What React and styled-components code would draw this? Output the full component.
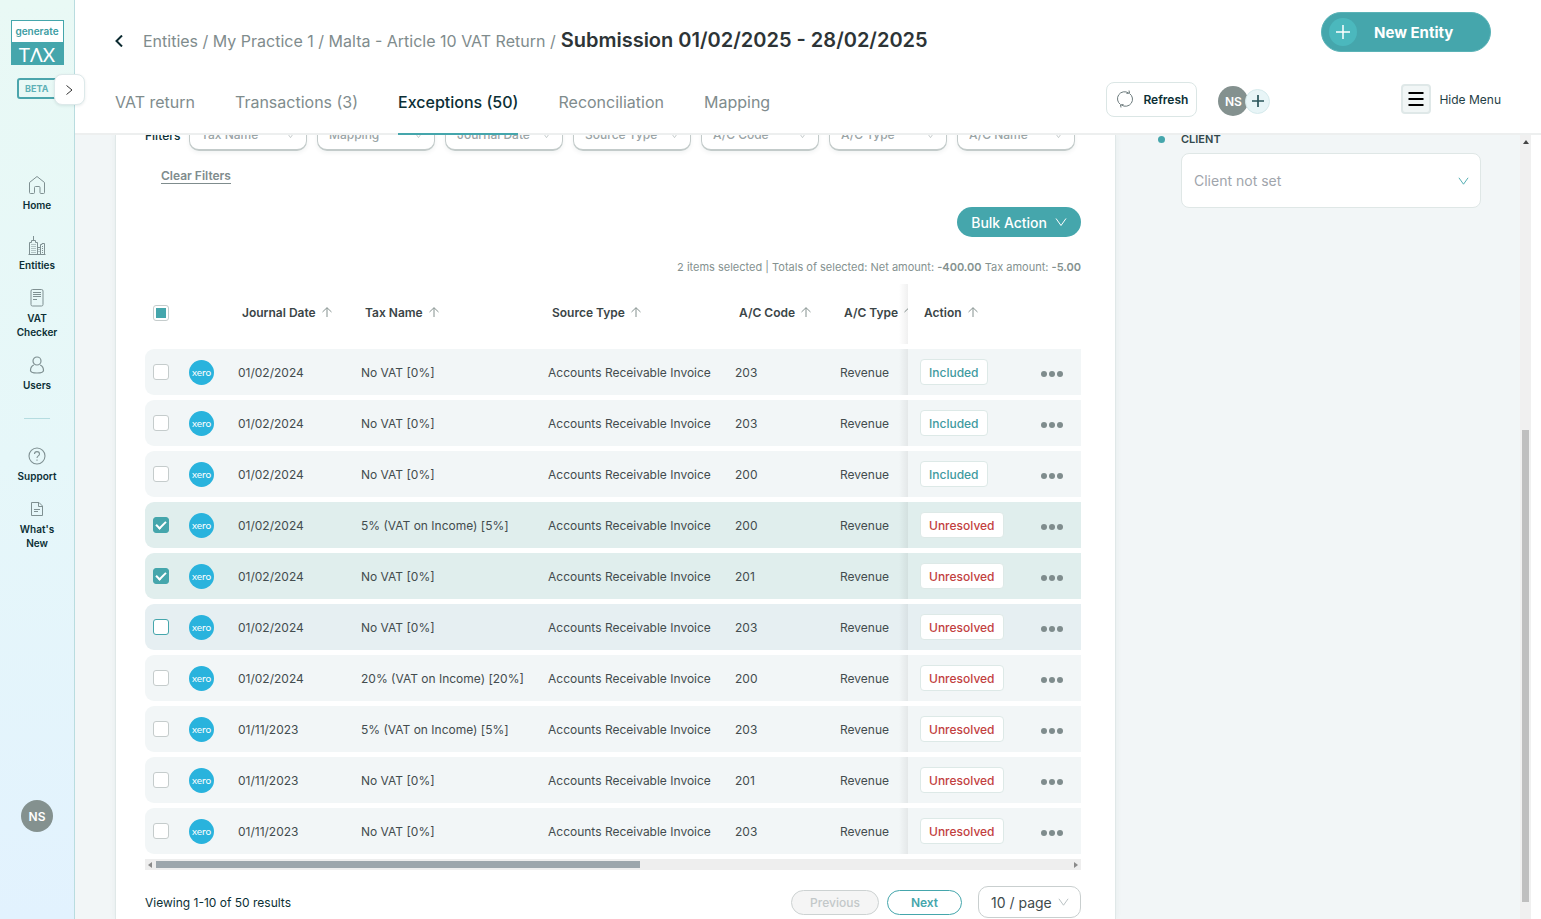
import { useState } from "react";
import styled, { createGlobalStyle } from "styled-components";

const GlobalStyle = createGlobalStyle`
  *, *::before, *::after {
    box-sizing: border-box;
  }
  body {
    margin: 0;
    background: #fff;
    color: #0b2f35;
    font-family: Inter, "Liberation Sans", sans-serif;
    font-size: 12px;
  }
  button, select, input {
    font-family: inherit;
    margin: 0;
  }
  button {
    cursor: pointer;
  }
  a {
    color: inherit;
    text-decoration: none;
  }
`;

const Page = styled.div`
  display: flex;
  height: 100vh;
  overflow: hidden;
`;

/* sidebar */

const Sidebar = styled.aside`
  position: relative;
  z-index: 3;
  flex: none;
  display: flex;
  flex-direction: column;
  align-items: center;
  width: 75px;
  padding: 20px 0 87px;
  border-right: 1px solid #b9dcdf;
  background: linear-gradient(180deg, #e9f9f5 0%, #e6f7f9 50%, #e2f2fe 100%);
`;

const Logo = styled.a`
  width: 53px;
  border: 1px solid #45a6ac;
  background: #fff;
  text-align: center;
`;

const LogoTop = styled.div`
  height: 21px;
  color: #3d9da3;
  font-size: 10px;
  font-weight: 600;
  line-height: 20px;
`;

const LogoBottom = styled.div`
  height: 22px;
  background: #45a6ac;
  color: #fff;
  font-family: Lato, Inter, sans-serif;
  font-size: 19px;
  line-height: 25px;
`;

const Beta = styled.div`
  align-self: flex-start;
  width: 42px;
  height: 21px;
  margin: 13px 0 0 17px;
  padding-left: 6px;
  border: 2px solid #4ba5ac;
  border-radius: 3px;
  color: #5fb1b7;
  font-size: 9px;
  font-weight: 700;
  line-height: 17px;
`;

const Expand = styled.button`
  position: absolute;
  top: 74px;
  right: -11px;
  display: flex;
  align-items: center;
  justify-content: center;
  width: 31px;
  height: 31px;
  padding: 0;
  border: 1px solid #dde9ea;
  border-radius: 8px;
  background: #fff;
  color: #333;
  box-shadow: 0 1px 3px rgba(0, 60, 60, 0.1);
`;

const Nav = styled.nav`
  display: flex;
  flex-direction: column;
  align-items: center;
  gap: 23px;
  margin-top: 76px;
`;

const NavGroup = styled.div`
  display: flex;
  flex-direction: column;
  gap: 16px;
`;

const NavItem = styled.a`
  display: flex;
  flex-direction: column;
  align-items: center;
  gap: 3px;
  width: 50px;
  font-size: 10px;
  font-weight: 600;
  line-height: 14px;
  text-align: center;
`;

const NavLine = styled.div`
  width: 26px;
  height: 1px;
  margin: 3px 0 4px;
  background: #b5dce0;
`;

const Avatar = styled.div`
  flex: none;
  display: flex;
  align-items: center;
  justify-content: center;
  width: 30px;
  height: 30px;
  border-radius: 50%;
  background: #84918f;
  color: #fff;
  font-size: 12px;
  font-weight: 600;
`;

const SideAvatar = styled(Avatar)`
  width: 32px;
  height: 32px;
  margin-top: auto;
`;

/* header */

const Main = styled.main`
  flex: 1;
  min-width: 0;
  display: flex;
  flex-direction: column;
`;

const Header = styled.header`
  position: relative;
  z-index: 2;
  flex: none;
  padding: 12px 40px 0;
  border-bottom: 2px solid #edefef;
  background: #fff;
`;

const TitleRow = styled.div`
  display: flex;
  align-items: flex-end;
  justify-content: space-between;
  padding-right: 10px;
`;

const Crumbs = styled.div`
  display: flex;
  align-items: baseline;
  color: #7f8c8d;
  font-size: 16px;
  line-height: 22px;
`;

const Back = styled.button`
  align-self: center;
  display: flex;
  width: 28px;
  padding: 0;
  border: 0;
  background: none;
  color: #0b2a30;
`;

const Title = styled.h1`
  margin: 0 0 0 5px;
  color: #2d3436;
  font-size: 20px;
  font-weight: 600;
  line-height: 22px;
`;

const NewEntity = styled.button`
  display: flex;
  align-items: center;
  gap: 17px;
  width: 170px;
  height: 40px;
  padding: 0 7px;
  border: 1px solid #5bb3b7;
  border-radius: 20px;
  background: #45a6ac;
  color: #fff;
  font-size: 15px;
  font-weight: 700;
`;

const PlusDisc = styled.i`
  display: flex;
  align-items: center;
  justify-content: center;
  width: 28px;
  height: 28px;
  border-radius: 50%;
  background: #4bb8bd;
`;

const TabRow = styled.div`
  display: flex;
  height: 66px;
  margin: 17px 0 -2px;
`;

const Tabs = styled.nav`
  display: flex;
  gap: 40px;
`;

const Tab = styled.a`
  border-bottom: 2px solid ${(props) => (props.$active ? "#45a6ac" : "transparent")};
  color: ${(props) => (props.$active ? "#0b2f35" : "#7f8c8d")};
  font-size: 16px;
  font-weight: ${(props) => (props.$active ? 500 : 400)};
  line-height: 66px;
  white-space: nowrap;
`;

const Actions = styled.div`
  display: flex;
  align-items: center;
  margin-left: auto;
  padding-bottom: 6px;
`;

const Refresh = styled.button`
  display: flex;
  align-items: center;
  gap: 9px;
  height: 35px;
  padding: 0 8px 0 9px;
  border: 1px solid #dbe6e5;
  border-radius: 8px;
  background: #fff;
  color: #0b2f35;
  font-size: 12px;
  font-weight: 600;
`;

const People = styled.div`
  display: flex;
  align-items: center;
  margin: 4px 131px 0 21px;
`;

const AddPerson = styled.button`
  display: flex;
  align-items: center;
  justify-content: center;
  width: 25px;
  height: 25px;
  margin-left: -3px;
  padding: 0;
  border: 1px solid #d5eaec;
  border-radius: 50%;
  background: #e8f5f7;
  color: #2a555b;
`;

const MenuToggle = styled.button`
  display: flex;
  align-items: center;
  gap: 8px;
  padding: 0;
  border: 0;
  background: none;
  color: #1f4046;
  font-size: 12px;
`;

const MenuIcon = styled.i`
  display: flex;
  align-items: center;
  justify-content: center;
  width: 30px;
  height: 30px;
  border: 2px solid #dfe8e8;
  border-radius: 4px;
  background: #f1f6f6;
  color: #000;
`;

/* content */

const Content = styled.div`
  flex: 1;
  display: flex;
  min-height: 0;
  margin-right: 10px;
  overflow: hidden;
  background: #f2f6f7;
`;

const Card = styled.section`
  flex: 1;
  min-width: 0;
  margin-left: 40px;
  padding: 0 34px 0 29px;
  border: 1px solid #e0e8e8;
  border-width: 0 1px;
  background: #fff;
  box-shadow: 0 0 6px rgba(0, 60, 60, 0.06);
`;

const FilterRow = styled.div`
  display: flex;
  align-items: center;
  gap: 10px;
  margin: -16px 6px 0 0;
`;

const FilterTitle = styled.span`
  width: 34px;
  font-weight: 500;
`;

const SelectBox = styled.label`
  position: relative;
  display: flex;
  flex: ${(props) => (props.$grow ? "1 1 0" : "none")};
  min-width: 0;

  svg {
    position: absolute;
    top: 50%;
    right: 12px;
    transform: translateY(-50%);
    pointer-events: none;
  }
`;

const FilterSelect = styled.select`
  appearance: none;
  width: 100%;
  height: 32px;
  padding: 0 24px 0 11px;
  border: 1px solid #c3cbca;
  border-bottom-width: 2px;
  border-radius: 10px;
  background: #fff;
  color: #9aa4a6;
  font-size: 12px;
  font-weight: 500;
  box-shadow: 0 2px 4px rgba(0, 50, 50, 0.06);
`;

const ClearFilters = styled.button`
  display: block;
  margin: 17px 0 0 16px;
  padding: 0;
  border: 0;
  border-bottom: 1px solid #7f8c8d;
  background: none;
  color: #7f8c8d;
  font-size: 12px;
  font-weight: 600;
  line-height: 15px;
`;

const BulkAction = styled.button`
  display: flex;
  align-items: center;
  gap: 8px;
  height: 30px;
  margin: 23px 0 0 auto;
  padding: 0 14px;
  border: 0;
  border-radius: 15px;
  background: #45a6ac;
  color: #fff;
  font-size: 14px;
  font-weight: 500;
`;

const Summary = styled.p`
  margin: 22px 0 0;
  color: #84918f;
  font-size: 11px;
  line-height: 16px;
  text-align: right;

  b {
    font-weight: 600;
  }
`;

const Table = styled.table`
  width: 100%;
  margin-top: 4px;
  border-collapse: separate;
  border-spacing: 0 5px;
  table-layout: fixed;
`;

const Col = styled.col`
  width: ${(props) => (props.$width ? `${props.$width}px` : "auto")};
`;

const Th = styled.th`
  height: 60px;
  padding: 0 0 4px 16px;
  overflow: hidden;
  color: #3b4547;
  font-size: 12px;
  font-weight: 600;
  text-align: left;
  white-space: nowrap;
`;

const CheckTh = styled.td`
  padding: 0 0 2px 8px;
`;

const Sort = styled.button`
  display: inline-flex;
  align-items: center;
  gap: 6px;
  padding: 0;
  border: 0;
  background: none;
  color: inherit;
  font-size: 12px;
  font-weight: 600;
`;

const tones = {
  plain: "#f2f6f7",
  selected: "#e0eeed",
  hover: "#e6eff2",
};

const Row = styled.tr`
  td {
    background: ${(props) => tones[props.$tone]};
  }
`;

const Td = styled.td`
  height: 46px;
  padding: 0 0 0 12px;
  color: #434c4e;
  font-size: 12px;
  white-space: nowrap;
`;

const CheckTd = styled(Td)`
  padding: 0 0 0 8px;
  border-radius: 9px 0 0 9px;
`;

const edgeShadow = `
  position: relative;

  &::before {
    content: "";
    position: absolute;
    top: 0;
    bottom: 0;
    left: -9px;
    width: 9px;
    background: linear-gradient(90deg, rgba(5, 5, 5, 0), rgba(5, 5, 5, 0.06));
  }
`;

const ActionTh = styled(Th)`
  ${edgeShadow}
  overflow: visible;
`;

const ActionTd = styled(Td)`
  ${edgeShadow}
`;

const ActionCell = styled.div`
  display: flex;
  align-items: center;
  justify-content: space-between;
  padding-right: 18px;
`;

const Checkbox = styled.input`
  appearance: none;
  position: relative;
  display: block;
  width: 16px;
  height: 16px;
  border: 1px solid ${(props) => (props.$hover ? "#45a6ac" : "#c5cccc")};
  border-radius: 3px;
  background: #fff;

  &:checked {
    border-color: #45a6ac;
    background: #45a6ac;
  }

  &:checked::after {
    content: "";
    position: absolute;
    top: 1px;
    left: 4px;
    width: 6px;
    height: 10px;
    border: solid #fff;
    border-width: 0 2px 2px 0;
    transform: rotate(45deg);
  }
`;

const CheckAll = styled(Checkbox)`
  &::after {
    content: "";
    position: absolute;
    top: 2px;
    left: 2px;
    width: 10px;
    height: 10px;
    background: #45a6ac;
  }
`;

const Xero = styled.span`
  display: block;
  width: 25px;
  height: 25px;
  border-radius: 50%;
  background: #29b3dd;
  color: #fff;
  font-family: Lato, Inter, sans-serif;
  font-size: 10px;
  line-height: 24px;
  text-align: center;
`;

const Status = styled.button`
  height: 26px;
  padding: 0 8px;
  border: 1px solid #dde9e7;
  border-radius: 4px;
  background: #fff;
  color: ${(props) => (props.$open ? "#c23f3f" : "#3f9aa0")};
  font-size: 12px;
  font-weight: 500;
`;

const More = styled.button`
  display: flex;
  gap: 2px;
  padding: 4px 0 0;
  border: 0;
  background: none;

  i {
    width: 6px;
    height: 6px;
    border-radius: 50%;
    background: #7f8c8d;
  }
`;

const ScrollX = styled.div`
  display: flex;
  align-items: center;
  justify-content: space-between;
  height: 11px;
  padding: 0 3px;
  background: #eee;
`;

const ThumbX = styled.div`
  width: 52%;
  height: 7px;
  margin: 0 auto 0 4px;
  background: #9ca6ac;
`;

const Footer = styled.div`
  display: flex;
  align-items: center;
  margin-top: 16px;
`;

const Viewing = styled.span`
  margin-right: auto;
`;

const PageButton = styled.button`
  width: ${(props) => props.$width}px;
  height: 25px;
  margin-right: 8px;
  padding: 0;
  border: 1px solid #45a6ac;
  border-radius: 13px;
  background: #fff;
  color: #45a6ac;
  font-size: 12px;
  font-weight: 600;

  &:disabled {
    border-color: #cdd2d2;
    background: #f5f5f5;
    color: #c3c8c9;
    font-weight: 500;
  }
`;

const PageSize = styled.select`
  appearance: none;
  width: 103px;
  height: 32px;
  padding: 0 24px 0 12px;
  border: 1px solid #c9cfcf;
  border-radius: 10px;
  background: #fff;
  color: #404a4c;
  font-size: 14px;
`;

const SizeBox = styled(SelectBox)`
  margin-left: 8px;
`;

const Side = styled.aside`
  flex: none;
  width: 404px;
  padding: 0 39px 0 42px;
`;

const SideField = styled.div`
  display: grid;
  grid-template-columns: 7px 1fr;
  column-gap: 16px;
  align-items: center;
`;

const Dot = styled.i`
  width: 7px;
  height: 7px;
  border-radius: 50%;
  background: #45a6ac;
`;

const SideLabel = styled.label`
  color: #33484c;
  font-size: 11px;
  font-weight: 600;
  line-height: 9px;
`;

const ClientBox = styled(SelectBox)`
  grid-column: 2;
  margin-top: 9px;
`;

const ClientSelect = styled.select`
  appearance: none;
  width: 100%;
  height: 55px;
  padding: 0 32px 0 12px;
  border: 1px solid #dfe7e6;
  border-radius: 8px;
  background: #fff;
  color: #9fa5ac;
  font-size: 14px;
`;

const ScrollY = styled.div`
  flex: none;
  display: flex;
  flex-direction: column;
  align-items: center;
  width: 11px;
  padding: 5px 0 17px;
  background: #f0f0f0;
`;

const ThumbY = styled.div`
  width: 7px;
  height: 62%;
  margin-top: auto;
  background: #bfbfbf;
`;

/* icons */

const Line = ({ size = 20, box = 20, width = 1, children, ...rest }) => (
  <svg
    width={size}
    height={size}
    viewBox={`0 0 ${box} ${box}`}
    fill="none"
    stroke="currentColor"
    strokeWidth={width}
    aria-hidden="true"
    {...rest}
  >
    {children}
  </svg>
);

const Chevron = ({ size = 12, color = "currentColor", width = 1 }) => (
  <Line size={size} box={12} width={width} color={color}>
    <path d="M1 2.5 L6 9.5 L11 2.5" />
  </Line>
);

const HomeIcon = () => (
  <Line color="#7f9092">
    <path d="M2.5 7.5 L10 1.500 L17.500 7.500 V17.500 A1 1 0 0 1 16.500 18.500 H14 A1 1 0 0 1 13 17.500 V12.500 A1 1 0 0 0 12 11.500 H8.500 A1 1 0 0 0 7.500 12.500 V17.500 A1 1 0 0 1 6.500 18.500 H3.500 A1 1 0 0 1 2.500 17.500 Z" />
  </Line>
);

const EntitiesIcon = () => (
  <Line color="#7f9092">
    <path d="M2.5 19.500 V7.500 H4.500 V5.500 H8.500 V7.500 H10.500 V19.500 M6.500 5.500 V1 M10.500 12.500 H13.500 M13.500 19.500 V9.500 H15 V8.500 H17.500 V19.500 M1.500 19.500 H18.500" />
    <path d="M4.500 9.500 H9 M4.500 11.500 H9 M4.500 13.500 H9 M4.500 15.500 H9 M4.500 17.500 H9 M11.500 14.500 H13 M11.500 16.500 H13 M15 11.500 H17 M15 13.500 H17 M15 15.500 H17 M15 17.500 H17" strokeDasharray="1 1" />
  </Line>
);

const CheckerIcon = () => (
  <Line color="#7f9092">
    <rect x="4" y="1.500" width="12" height="16.500" rx="1.500" />
    <path d="M6 4.500 H14 M6 6.500 H14 M6 8.500 H14 M6 11.500 H10" />
  </Line>
);

const UsersIcon = () => (
  <Line color="#7f9092" width={1.2}>
    <circle cx="10" cy="6" r="4" />
    <path d="M6.800 10 C4.500 11 3.500 13 3.500 15.500 C3.500 17.300 6 18 10 18 C14 18 16.500 17.300 16.500 15.500 C16.500 13 15.500 11 13.200 10" />
  </Line>
);

const SupportIcon = () => (
  <Line color="#7f9092" width={1.1}>
    <circle cx="10" cy="10" r="8" />
    <path d="M7.500 8 C7.500 4.800 12.500 4.800 12.500 8 C12.500 10 10 9.800 10 12 M10 13.500 V14.800" />
  </Line>
);

const NewsIcon = () => (
  <Line color="#7f9092">
    <path d="M4.500 3.500 H12 L15.500 7 V16.500 H4.500 Z M11.500 3.500 V7.500 H15.500 M7 10.500 H13 M7 12.500 H11" />
  </Line>
);

const RefreshIcon = () => (
  <Line size={18} box={18} color="#6d7b7d">
    <path d="M4.500 14.500 A7 7 0 0 1 12.500 3 M13.500 3.500 A7 7 0 0 1 5.500 15" />
    <path d="M10.500 3.500 L13.500 3 L13 0.500 M7.500 14.500 L4.500 15 L5 17.500" />
  </Line>
);

const PlusIcon = ({ size, width }) => (
  <Line size={size} box={14} width={width}>
    <path d="M7 0 V14 M0 7 H14" />
  </Line>
);

const ArrowUp = () => (
  <Line size={10} box={10} color="#84918f">
    <path d="M5 10 V0.800 M0.500 5 L5 0.700 L9.500 5" />
  </Line>
);

const filters = ["Tax Name", "Mapping", "Journal Date", "Source Type", "A/C Code", "A/C Type", "A/C Name"];

const columns = ["Journal Date", "Tax Name", "Source Type", "A/C Code", "A/C Type"];

const rows = [
  { date: "01/02/2024", tax: "No VAT [0%]", code: "203", status: "Included" },
  { date: "01/02/2024", tax: "No VAT [0%]", code: "203", status: "Included" },
  { date: "01/02/2024", tax: "No VAT [0%]", code: "200", status: "Included" },
  { date: "01/02/2024", tax: "5% (VAT on Income) [5%]", code: "200", status: "Unresolved" },
  { date: "01/02/2024", tax: "No VAT [0%]", code: "201", status: "Unresolved" },
  { date: "01/02/2024", tax: "No VAT [0%]", code: "203", status: "Unresolved", hover: true },
  { date: "01/02/2024", tax: "20% (VAT on Income) [20%]", code: "200", status: "Unresolved" },
  { date: "01/11/2023", tax: "5% (VAT on Income) [5%]", code: "203", status: "Unresolved" },
  { date: "01/11/2023", tax: "No VAT [0%]", code: "201", status: "Unresolved" },
  { date: "01/11/2023", tax: "No VAT [0%]", code: "203", status: "Unresolved" },
];

const SortHead = ({ children }) => (
  <Sort type="button">
    {children}
    <ArrowUp />
  </Sort>
);

const SideNav = () => (
  <Sidebar>
    <Logo href="#" aria-label="generate TAX">
      <LogoTop>generate</LogoTop>
      <LogoBottom>TΛX</LogoBottom>
    </Logo>
    <Beta>BETA</Beta>
    <Expand type="button" aria-label="Expand sidebar">
      <Line size={10} box={10}>
        <path d="M1.500 0.500 L7 5 L1.500 9.500" />
      </Line>
    </Expand>
    <Nav>
      <NavGroup>
        <NavItem href="#"><HomeIcon />Home</NavItem>
      </NavGroup>
      <NavGroup>
        <NavItem href="#"><EntitiesIcon />Entities</NavItem>
        <NavItem href="#"><CheckerIcon />VAT Checker</NavItem>
        <NavItem href="#"><UsersIcon />Users</NavItem>
      </NavGroup>
      <NavLine />
      <NavGroup>
        <NavItem href="#"><SupportIcon />Support</NavItem>
        <NavItem href="#"><NewsIcon />What's New</NavItem>
      </NavGroup>
    </Nav>
    <SideAvatar>NS</SideAvatar>
  </Sidebar>
);

const PageHeader = () => (
  <Header>
    <TitleRow>
      <Crumbs>
        <Back type="button" aria-label="Back">
          <Line size={12} box={12} width={2}>
            <path d="M7 0.500 L1.500 6 L7 11.500" />
          </Line>
        </Back>
        <span>
          <a href="#">Entities</a> / <a href="#">My Practice 1</a> /{" "}
          <a href="#">Malta - Article 10 VAT Return</a> /
        </span>
        <Title>Submission 01/02/2025 - 28/02/2025</Title>
      </Crumbs>
      <NewEntity type="button">
        <PlusDisc><PlusIcon size={14} width={1.5} /></PlusDisc>
        New Entity
      </NewEntity>
    </TitleRow>
    <TabRow>
      <Tabs>
        <Tab href="#">VAT return</Tab>
        <Tab href="#">Transactions (3)</Tab>
        <Tab href="#" $active>Exceptions (50)</Tab>
        <Tab href="#">Reconciliation</Tab>
        <Tab href="#">Mapping</Tab>
      </Tabs>
      <Actions>
        <Refresh type="button">
          <RefreshIcon />
          Refresh
        </Refresh>
        <People>
          <Avatar>NS</Avatar>
          <AddPerson type="button" aria-label="Add person">
            <PlusIcon size={12} width={2} />
          </AddPerson>
        </People>
        <MenuToggle type="button">
          <MenuIcon>
            <Line size={16} box={16} width={2}>
              <path d="M0.500 2 H15.500 M0.500 8 H15.500 M0.500 14 H15.500" />
            </Line>
          </MenuIcon>
          Hide Menu
        </MenuToggle>
      </Actions>
    </TabRow>
  </Header>
);

const App = () => {
  const [selected, setSelected] = useState([3, 4]);

  const toggle = (index) => {
    if (selected.includes(index)) {
      setSelected(selected.filter((item) => item !== index));
    } else {
      setSelected([...selected, index]);
    }
  };

  const getTone = (row, index) => {
    if (selected.includes(index)) return "selected";
    return row.hover ? "hover" : "plain";
  };

  return (
    <Page>
      <GlobalStyle />
      <SideNav />
      <Main>
        <PageHeader />
        <Content>
          <Card>
            <FilterRow>
              <FilterTitle>Filters</FilterTitle>
              {filters.map((name) => (
                <SelectBox key={name} $grow>
                  <FilterSelect aria-label={name}>
                    <option>{name}</option>
                  </FilterSelect>
                  <Chevron size={9} color="#b4bcbe" />
                </SelectBox>
              ))}
            </FilterRow>
            <ClearFilters type="button">Clear Filters</ClearFilters>
            <BulkAction type="button">
              Bulk Action
              <Chevron size={12} />
            </BulkAction>
            <Summary>
              2 items selected | Totals of selected: Net amount: <b>-400.00</b> Tax amount: <b>-5.00</b>
            </Summary>
            <Table>
              <colgroup>
                <Col $width={32} />
                <Col $width={49} />
                <Col $width={123} />
                <Col $width={187} />
                <Col $width={187} />
                <Col $width={105} />
                <Col />
                <Col $width={173} />
              </colgroup>
              <thead>
                <tr>
                  <CheckTh>
                    <CheckAll type="checkbox" aria-label="Select all rows" />
                  </CheckTh>
                  <td />
                  {columns.map((name) => (
                    <Th key={name}><SortHead>{name}</SortHead></Th>
                  ))}
                  <ActionTh><SortHead>Action</SortHead></ActionTh>
                </tr>
              </thead>
              <tbody>
                {rows.map((row, index) => (
                  <Row key={index} $tone={getTone(row, index)}>
                    <CheckTd>
                      <Checkbox
                        type="checkbox"
                        aria-label={`Select row ${index + 1}`}
                        checked={selected.includes(index)}
                        onChange={() => toggle(index)}
                        $hover={row.hover}
                      />
                    </CheckTd>
                    <Td><Xero>xero</Xero></Td>
                    <Td>{row.date}</Td>
                    <Td>{row.tax}</Td>
                    <Td>Accounts Receivable Invoice</Td>
                    <Td>{row.code}</Td>
                    <Td>Revenue</Td>
                    <ActionTd>
                      <ActionCell>
                        <Status type="button" $open={row.status === "Unresolved"}>{row.status}</Status>
                        <More type="button" aria-label="More actions"><i /><i /><i /></More>
                      </ActionCell>
                    </ActionTd>
                  </Row>
                ))}
              </tbody>
            </Table>
            <ScrollX aria-hidden="true">
              <svg width="4" height="6"><path d="M4 0 L0 3 L4 6 Z" fill="#8a8a8a" /></svg>
              <ThumbX />
              <svg width="4" height="6"><path d="M0 0 L4 3 L0 6 Z" fill="#8a8a8a" /></svg>
            </ScrollX>
            <Footer>
              <Viewing>Viewing 1-10 of 50 results</Viewing>
              <PageButton type="button" $width={88} disabled>Previous</PageButton>
              <PageButton type="button" $width={75}>Next</PageButton>
              <SizeBox>
                <PageSize aria-label="Rows per page">
                  <option>10 / page</option>
                </PageSize>
                <Chevron size={11} color="#b4bcbe" />
              </SizeBox>
            </Footer>
          </Card>
          <Side>
            <SideField>
              <Dot />
              <SideLabel htmlFor="client">CLIENT</SideLabel>
              <ClientBox as="div">
                <ClientSelect id="client">
                  <option>Client not set</option>
                </ClientSelect>
                <Chevron size={11} color="#45a6ac" />
              </ClientBox>
            </SideField>
          </Side>
          <ScrollY aria-hidden="true">
            <svg width="6" height="4"><path d="M0 4 L3 0 L6 4 Z" fill="#444" /></svg>
            <ThumbY />
          </ScrollY>
        </Content>
      </Main>
    </Page>
  );
};

export default App;
